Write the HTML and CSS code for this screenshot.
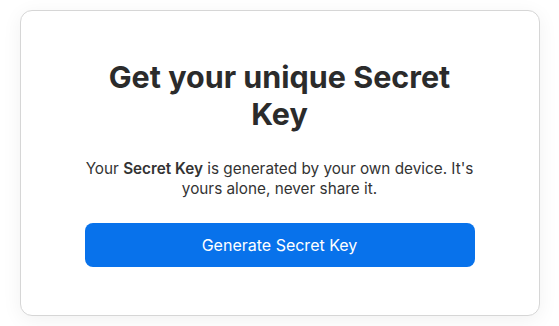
FILE: index.html
```html
<!DOCTYPE html>
<html lang="en">
<head>
    <meta charset="UTF-8">
    <meta name="viewport" content="width=device-width, initial-scale=1.0">
    <title>Secret Key</title>
    <link rel="stylesheet" href="styles.css">
</head>
<body>
    <!-- Secret key card -->
    <div class="card">
        <h1>Get your unique Secret Key</h1>
        <p>Your <strong>Secret Key</strong> is generated by your own device. It's yours alone, never share it.</p>
        <button class="primary-btn">Generate Secret Key</button>
    </div>
</body>
</html>
```

FILE: styles.css
```css
body {
    font-family: 'Inter', sans-serif;
    background-color: #fff;
    color: #333;
    margin: 0;
    height: 326px;
    display: flex;
    align-items: center;
    justify-content: center;
}
.card {
    width: 520px;
    box-sizing: border-box;
    padding: 47px 64px 48px;
    background-color: #fff;
    border: 1px solid #d6d6d6;
    border-radius: 12px;
    box-shadow: 0 4px 20px rgba(0, 0, 0, 0.06);
    text-align: center;
}
.card h1 {
    font-size: 30.5px;
    line-height: 37px;
    font-weight: 700;
    color: #2b2b2b;
    margin: 0 0 27px;
}
.card p {
    font-size: 15.3px;
    line-height: 20px;
    color: #333;
    margin: 0 0 24px;
}
.card strong {
    font-weight: 600;
}
.primary-btn {
    display: block;
    width: 100%;
    height: 44px;
    font-family: inherit;
    font-size: 16px;
    color: #fff;
    background-color: #0872eb;
    border: none;
    border-radius: 8px;
    cursor: pointer;
}
```
